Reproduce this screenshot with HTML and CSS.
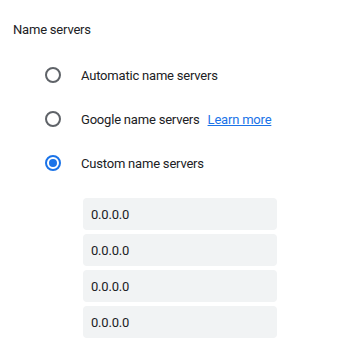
FILE: index.html
```html
<!DOCTYPE html>
<html lang="en">
<head>
    <meta charset="UTF-8">
    <meta name="viewport" content="width=device-width, initial-scale=1.0">
    <title>Name servers</title>
    <link rel="stylesheet" href="styles.css">
</head>
<body>
    <div class="settings-section">
        <div class="section-title">Name servers</div>
        <div class="radio-group">
            <label class="radio-row">
                <span class="radio"></span>
                <span class="radio-label">Automatic name servers</span>
            </label>
            <label class="radio-row">
                <span class="radio"></span>
                <span class="radio-label">Google name servers</span>
                <a href="#" class="learn-more">Learn more</a>
            </label>
            <label class="radio-row">
                <span class="radio checked"></span>
                <span class="radio-label">Custom name servers</span>
            </label>
        </div>
        <div class="server-list">
            <input type="text" class="server-input" value="0.0.0.0">
            <input type="text" class="server-input" value="0.0.0.0">
            <input type="text" class="server-input" value="0.0.0.0">
            <input type="text" class="server-input" value="0.0.0.0">
        </div>
    </div>
</body>
</html>
```

FILE: styles.css
```css
body {
    margin: 0;
    font-family: Roboto, "Liberation Sans", sans-serif;
    font-size: 13px;
    letter-spacing: -0.2px;
    color: #202124;
    background: #fff;
}

.settings-section {
    padding: 20px 13px 0;
}

.section-title {
    line-height: 20px;
    margin-bottom: 13px;
}

.radio-group {
    display: flex;
    flex-direction: column;
    padding-left: 32px;
}

.radio-row {
    display: flex;
    align-items: center;
    height: 44px;
}

.radio {
    box-sizing: border-box;
    width: 16px;
    height: 16px;
    border: 2px solid #5f6368;
    border-radius: 50%;
    margin-right: 20px;
    display: flex;
    align-items: center;
    justify-content: center;
}

.radio.checked {
    border-color: #1a73e8;
}

.radio.checked::after {
    content: '';
    width: 8px;
    height: 8px;
    border-radius: 50%;
    background: #1a73e8;
}

.learn-more {
    margin-left: 8px;
    color: #1a73e8;
    text-decoration: underline;
}

.server-list {
    display: flex;
    flex-direction: column;
    gap: 4px;
    margin: 13px 0 0 70px;
}

.server-input {
    box-sizing: border-box;
    width: 194px;
    height: 32px;
    padding: 0 8px;
    border: none;
    border-radius: 4px;
    background: #f1f3f4;
    font-family: inherit;
    font-size: 13px;
    letter-spacing: -0.2px;
    color: #202124;
}
```
